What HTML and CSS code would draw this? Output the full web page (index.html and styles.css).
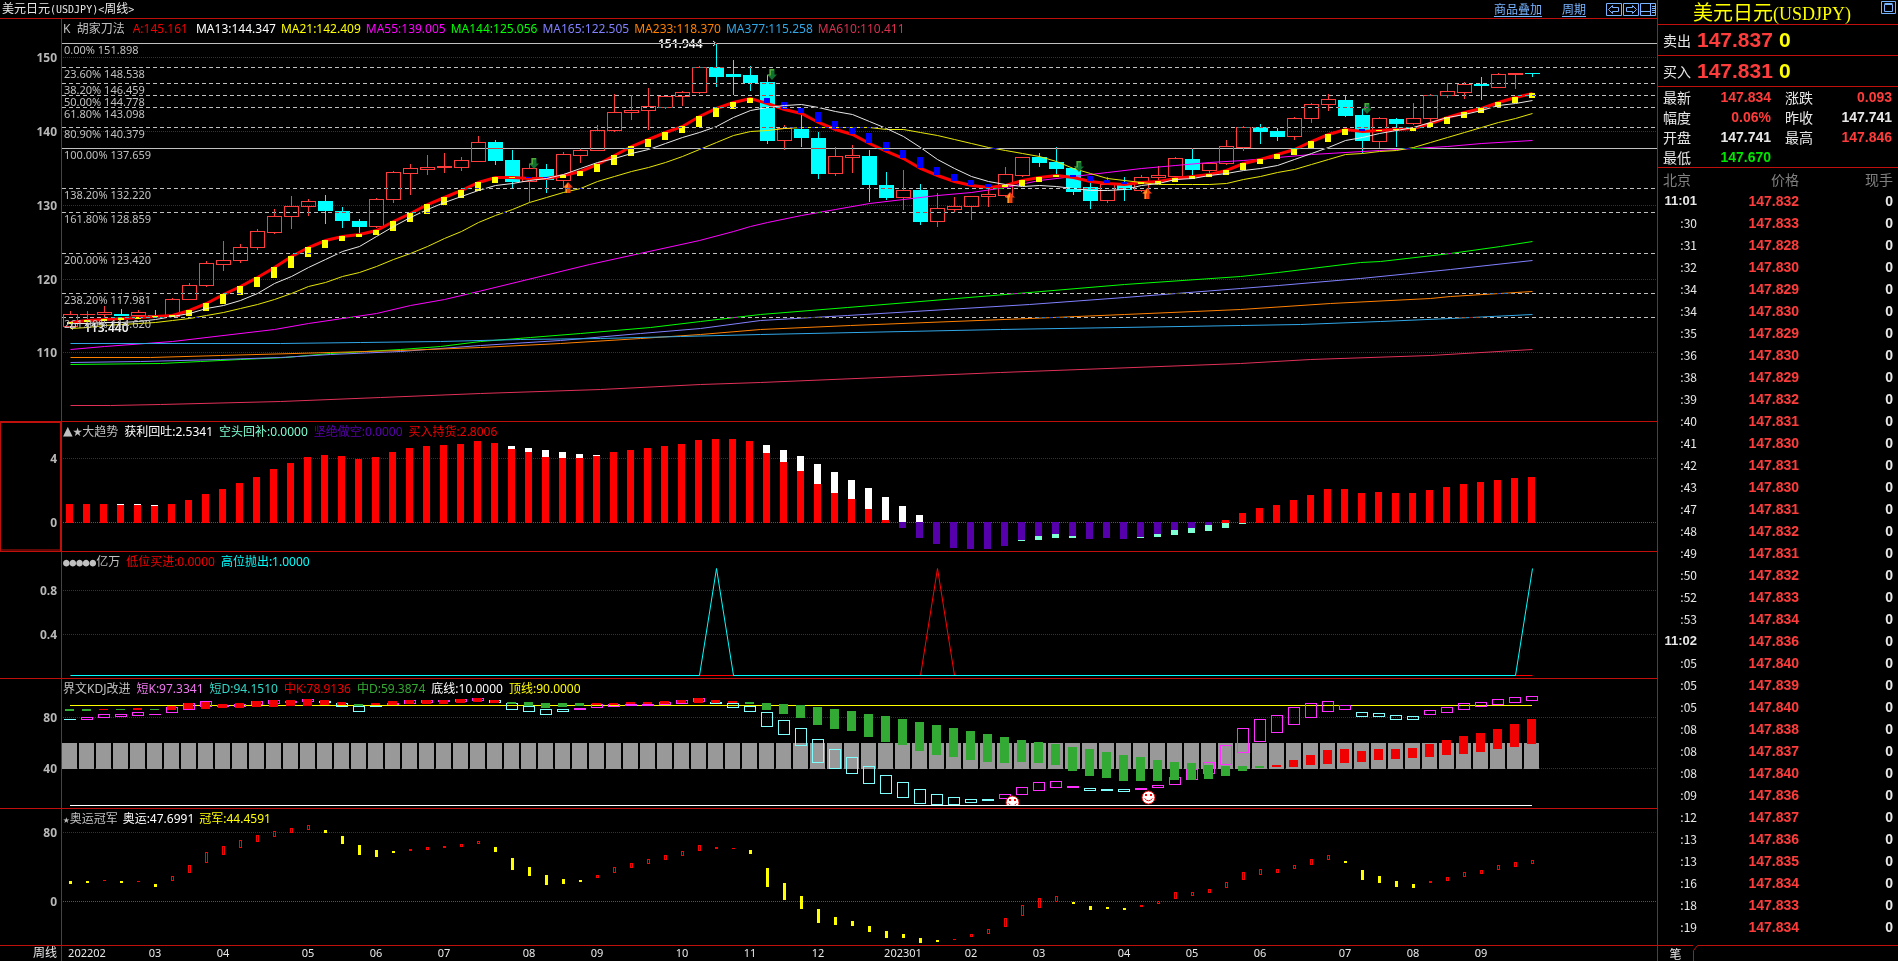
FILE: index.html
```html
<!DOCTYPE html>
<html lang="zh-CN">
<head>
<meta charset="utf-8">
<title>美元日元(USDJPY)周线</title>
<link rel="stylesheet" href="styles.css">
</head>
<body>
<div class="terminal">
  <main class="charts">
    <header class="titlebar">
      <h1 class="title">美元日元<span class="latin">(USDJPY)&lt;</span>周线<span class="latin">&gt;</span></h1>
      <nav class="tools">
        <a href="#overlay" class="tool">商品叠加</a>
        <a href="#period" class="tool">周期</a>
        <div class="tool-icons">
          <button class="icon" aria-label="向左"><svg width="17" height="15" viewBox="0 0 17 15"><path d="M.5 1.5h15v12H.5zM2.5 7.5l4-4v2h6v4h-6v2z"/></svg></button>
          <button class="icon" aria-label="向右"><svg width="17" height="15" viewBox="0 0 17 15"><path d="M.5 1.5h15v12H.5zM13.500 7.500l-4-4v2h-6v4h6v2z"/></svg></button>
          <button class="icon" aria-label="布局"><svg width="17" height="15" viewBox="0 0 17 15"><path d="M.5 1.500h15v12H.5zM.5 9.500h10M10.500 1.500v12M12 4.500h3M12 6.500h3M12 8.500h3M12 10.500h3"/></svg></button>
        </div>
      </nav>
    </header>
    <section class="panel panel-price">
      <svg class="plot" id="price"></svg>
      <p class="legend tight"><span class="name wide">K&nbsp; 胡家刀法</span><span class="c-red wide">A:145.161</span><span class="c-white">MA13:144.347</span><span class="c-yellow">MA21:142.409</span><span class="c-magenta">MA55:139.005</span><span class="c-lime">MA144:125.056</span><span class="c-violet">MA165:122.505</span><span class="c-orange">MA233:118.370</span><span class="c-blue">MA377:115.258</span><span class="c-rose">MA610:110.411</span></p>
    </section>
    <section class="panel panel-trend">
      <svg class="plot" id="trend"></svg>
      <p class="legend"><span class="name"><span class="mark large">▲★</span>大趋势</span><span class="c-white">获利回吐:2.5341</span><span class="c-mint">空头回补:0.0000</span><span class="c-purple">坚绝做空:0.0000</span><span class="c-red">买入持货:2.8006</span></p>
    </section>
    <section class="panel panel-signal">
      <svg class="plot" id="signal"></svg>
      <p class="legend"><span class="name"><span class="mark">●●●●●</span>亿万</span><span class="c-red">低位买进:0.0000</span><span class="c-cyan">高位抛出:1.0000</span></p>
    </section>
    <section class="panel panel-kdj">
      <svg class="plot" id="kdj"></svg>
      <p class="legend"><span class="name">界文KDJ改进</span><span class="c-pink">短K:97.3341</span><span class="c-teal">短D:94.1510</span><span class="c-red">中K:78.9136</span><span class="c-green">中D:59.3874</span><span class="c-white">底线:10.0000</span><span class="c-yellow">顶线:90.0000</span></p>
    </section>
    <section class="panel panel-champ">
      <svg class="plot" id="champ"></svg>
      <p class="legend tight"><span class="name"><span class="mark">★</span>奥运冠军</span><span class="c-white">奥运:47.6991</span><span class="c-yellow">冠军:44.4591</span></p>
    </section>
    <footer class="panel panel-axis"><svg class="plot" id="axis"></svg></footer>
  </main>
  <aside class="quote">
    <div class="quote-title">
      <h2>美元日元<span class="latin">(USDJPY)</span></h2>
      <button class="icon" aria-label="窗口"><svg width="17" height="15" viewBox="0 0 17 15"><path d="M1.500 1.500h14v12h-14zM4.500 4.500h8v7h-8zM4.500 3.500h8"/></svg></button>
    </div>
    <div class="deal"><span>卖出</span><strong class="c-up">147.837</strong><strong class="c-yellow">0</strong></div>
    <div class="deal"><span>买入</span><strong class="c-up">147.831</strong><strong class="c-yellow">0</strong></div>
    <dl class="stats">
      <dt>最新</dt><dd class="c-up">147.834</dd><dt>涨跌</dt><dd class="c-up">0.093</dd>
      <dt>幅度</dt><dd class="c-up">0.06%</dd><dt>昨收</dt><dd>147.741</dd>
      <dt>开盘</dt><dd>147.741</dd><dt>最高</dt><dd class="c-up">147.846</dd>
      <dt>最低</dt><dd class="c-down">147.670</dd>
    </dl>
    <div class="tick-area">
      <table class="ticks">
        <thead><tr><th>北京</th><th>价格</th><th>现手</th></tr></thead>
        <tbody id="ticks"></tbody>
      </table>
    </div>
    <div class="tabs"><button class="tab">笔</button><svg class="tab-edge" width="12" height="16" viewBox="0 0 12 16"><path d="M.5 16V5.500l4-5H12"/></svg><span class="tab-line"></span></div>
  </aside>
</div>
<script src="chart.js"></script>
</body>
</html>
```

FILE: styles.css
```css
* { box-sizing: border-box; margin: 0; padding: 0; }
:root { --rule: #c0100c; --text: #e8e8e8; --link: #78b4ff; }
body {
  background: #000;
  color: var(--text);
  font-family: "Noto Sans", "Noto Sans CJK SC", sans-serif;
  font-size: 12px;
}
.terminal { display: grid; grid-template-columns: minmax(0, 1fr) 241px; height: 100vh; overflow: hidden; }
.charts {
  display: grid;
  grid-template-rows: 18px 403fr 130fr 127fr 130fr 137fr 16px;
  min-height: 0;
}
.titlebar { display: flex; justify-content: space-between; align-items: center; padding-left: 2px; line-height: 18px; }
.title { font-size: 12px; font-weight: 400; font-family: "Noto Sans CJK SC", sans-serif; }
.title .latin { font-family: "DejaVu Sans Mono", monospace; font-size: 10px; }
.tools { display: flex; align-items: center; gap: 20px; font-family: "Noto Sans CJK SC", sans-serif; }
.tool { color: var(--link); text-decoration: underline; text-underline-offset: 2px; }
.tool-icons { display: flex; }
.icon { display: block; background: none; border: 0; height: 15px; width: 17px; }
.icon svg { display: block; fill: none; stroke: var(--link); }

.panel { position: relative; border-top: 1px solid var(--rule); min-height: 0; overflow: hidden; }
.panel-axis, .panel-axis .plot { overflow: visible; }
.plot { position: absolute; inset: 0; width: 100%; height: 100%; }
.legend { position: relative; display: flex; gap: 6px; padding-left: 63px; line-height: 20px; white-space: nowrap; }
.legend.tight { gap: 5px; }
.legend .wide { margin-right: 3px; }
.mark { font-family: "DejaVu Sans Mono", monospace; font-size: 11px; line-height: 1; }
.mark.large { font-size: 16px; }
.name { color: #c0c0c0; }
.c-red { color: #f00000; }
.c-white { color: #fff; }
.c-yellow { color: #ff0; }
.c-magenta { color: #f0f; }
.c-lime { color: #0f0; }
.c-violet { color: #8080ff; }
.c-orange { color: #ff8000; }
.c-blue { color: #30a8e8; }
.c-rose { color: #d83050; }
.c-mint { color: #7fffd4; }
.c-purple { color: #5a00b0; }
.c-cyan { color: #0ff; }
.c-pink { color: #ee78ee; }
.c-teal { color: #30d8c8; }
.c-green { color: #33aa33; }
.c-up { color: #ff3c3c; }
.c-down { color: #00e600; }

.plot text { font-family: "Noto Sans", "Noto Sans CJK SC", sans-serif; }
.tick-label { font-size: 12px; font-weight: 700; fill: #b8b8b8; text-anchor: end; }
.fib-label { font-size: 11px; fill: #c0c0c0; }
.peak-label { font-size: 12px; font-weight: 600; fill: #f0f0f0; }
.plot .month { font-family: "Noto Sans", sans-serif; font-size: 11px; fill: var(--text); text-anchor: middle; }
.plot .unit { font-family: "Noto Sans CJK SC", sans-serif; font-size: 12px; fill: var(--text); text-anchor: end; }
.xor { mix-blend-mode: difference; }

.quote {
  display: flex;
  flex-direction: column;
  border-left: 1px solid var(--rule);
  font-family: "Noto Sans CJK SC", sans-serif;
  font-size: 14px;
  min-height: 0;
}
.quote-title { display: flex; height: 24px; padding-right: 1px; }
.quote-title h2 { flex: 1; padding-left: 6px; text-align: center; font-size: 20px; line-height: 24px; font-weight: 400; color: #ff0; white-space: nowrap; }
.quote-title .latin { font-family: "Liberation Serif", serif; font-size: 18px; }
.deal { display: flex; align-items: center; height: 31px; padding-left: 5px; border-top: 1px solid var(--rule); }
.deal strong { margin-left: 6px; font-family: "Liberation Sans", sans-serif; font-size: 21px; }
.stats {
  display: grid;
  grid-template-columns: 28px 80px 42px 79px;
  grid-auto-rows: 20px;
  padding-left: 5px;
  line-height: 20px;
  height: 81px;
  border-top: 1px solid var(--rule);
}
.stats dt:nth-of-type(even) { padding-left: 14px; }
.stats dd { text-align: right; font-family: "Liberation Sans", sans-serif; font-weight: 700; }
.tick-area { flex: 1; min-height: 0; overflow: hidden; border-top: 1px solid var(--rule); }
.ticks { width: 100%; border-collapse: collapse; table-layout: fixed; }
.ticks th { color: #808080; font-weight: 400; text-align: right; }
.ticks th:first-child { width: 39px; padding-left: 5px; text-align: left; }
.ticks th:nth-child(2) { width: 102px; }
.ticks tr { height: 22px; line-height: 22px; }
.ticks td { text-align: right; font-family: "Liberation Sans", sans-serif; font-weight: 700; }
.ticks td.minute { font-size: 13px; }
.ticks td.second { font-family: "Noto Sans CJK SC", sans-serif; font-size: 12px; font-weight: 400; }
.ticks td:last-child, .ticks th:last-child { padding-right: 5px; }
.tabs { display: flex; height: 16px; }
.tab { width: 35px; border: 0; border-top: 1px solid var(--rule); background: none; color: var(--text); font: 12px/15px "Noto Sans CJK SC", sans-serif; }
.tab-edge { fill: none; stroke: var(--rule); }
.tab-line { flex: 1; border-top: 1px solid var(--rule); }
```

FILE: chart.js
```js
const BASE_W = 1657, LEFT = 62, FIRST = 70, STEP = 17;

/* kind, body top, body bottom, high, low */
const candles = `u314,326,311,327 u314,314,311,319 u312,314,306,318 d314,315,309,316 u312,315,310,317 d315,315,310,316
u299,316,298,316 u285,299,283,299 u263,285,261,287 u260,264,241,271 u247,260,244,263 u231,247,229,250 u216,232,209,234
u206,216,196,229 u201,206,199,216 d201,210,195,224 d211,220,207,228 d221,226,219,233 u199,226,198,228 u172,199,171,203
u168,173,164,195 u167,169,155,175 u166,167,153,173 u160,167,157,171 u142,161,136,161 d142,160,140,165 d160,181,150,188
u168,181,164,202 d169,179,164,193 u154,180,152,188 u150,155,148,163 u130,150,125,150 u112,130,94,132 u110,112,95,120
u106,110,88,130 u96,107,96,109 u92,96,91,106 u67,92,66,94 d67,76,43,87 d74,76,60,95 d75,82,66,91 d82,140,75,144
u128,140,125,150 d129,137,115,147 d138,173,132,179 u156,173,147,176 u155,157,145,173 d156,184,150,202 d185,197,172,200
u190,197,170,210 d190,221,184,225 u208,221,193,227 u206,209,197,213 u196,206,196,220 u194,196,188,207 u174,195,167,196
u157,175,157,177 d157,162,153,167 d162,168,147,174 d168,191,168,195 d187,200,183,209 u184,200,177,203 d185,189,177,201
u177,190,175,191 u175,177,166,180 u158,176,157,182 d159,169,148,175 u163,170,163,177 u146,163,140,165 u127,147,126,151
d127,131,124,144 d131,136,128,141 u118,136,117,140 u104,118,103,123 u99,104,94,111 d100,115,96,117 d115,140,109,153
u118,141,117,148 d119,123,118,147 u118,123,103,125 u95,118,94,122 u91,95,83,98 u84,92,82,99 d84,85,77,100 u74,87,73,87
u73,74,73,89 d73,73,73,77`;

/* y: rising marker under the A line, b: falling marker above it */
const markers = `y322,324 y320,322 y319,321 y318,320 y317,319 y316,317 y315,317 y310,316 y303,311 y294,304 y286,295 y277,287 y267,278
y256,268 y247,257 y240,248 y236,241 y234,237 y230,235 y221,231 y213,222 y204,214 y197,205 y190,198 y182,191 y177,183 y177,178
b177,178 b177,178 y175,178 y171,176 y164,172 y155,165 y146,156 y139,147 y132,140 y126,133 y116,127 y108,117 y102,109 y98,103
b98,103 b102,109 b108,113 b112,122 b121,129 b128,134 b133,143 b142,151 b150,158 b157,168 b167,175 b174,181 b180,185 b184,187
y185,187 y180,186 y177,182 y175,177 b175,177 b176,181 b180,183 b182,184 y182,184 y181,184 y178,182 y176,179 y174,177 y170,175
y163,170 y159,164 y154,159 y149,155 y141,148 y134,142 y129,135 b129,131 y130,131 y129,130 y128,131 y123,127 y117,124 y112,118
y108,113 y102,107 y97,103 y93,98`;

const ma13 = [323,323,322,322,321,319,316,313,308,305,300,293,283,276,267,259,251,246,236,226,217,209,202,196,190,185,183,180,178,174,168,162,158,153,149,143,137,132,126,117,110,107,105,104,107,111,114,121,128,136,147,159,168,176,181,184,186,185,186,188,190,190,189,185,183,179,178,175,173,170,168,165,159,153,147,140,137,133,130,127,122,117,114,110,105,103,100];
const ma21 = [328,327,325,324,323,322,320,318,315,312,308,304,299,293,286,282,276,272,266,259,253,246,238,231,222,215,209,202,197,192,188,181,176,171,167,162,156,149,142,135,131,130,128,127,127,127,127,127,129,129,132,135,139,143,147,150,153,156,161,168,173,178,180,182,184,184,184,184,183,179,176,172,169,164,159,154,153,151,150,147,142,137,132,127,122,118,113];
/* long averages as x,y points */
const longMa = {
  '#f0f': '70,349 104,346 172,341 274,329 308,323 342,318 376,313 410,305 444,299 478,291 589,264 699,240 733,231 750,226 767,222 801,215 835,209 869,203 903,199 937,195 971,192 1005,187 1039,180 1073,176 1107,172 1141,168 1175,165 1209,162 1243,160 1277,157 1311,154 1379,150 1413,148 1447,146 1481,143 1532,140',
  '#0f0': '70,364 160,363 200,361 240,359 285,357 330,353 400,349 440,346 480,341 530,337 580,333 650,327 700,321 760,314 847,307 1029,292 1124,284 1240,276 1278,272 1360,262 1380,261 1450,253 1500,246 1532,241',
  '#8080ff': '70,362 140,361 220,359 280,357 330,354 400,351 480,345 560,340 640,333 700,328 760,320 847,315 1029,304 1124,297 1240,288 1278,285 1360,278 1410,273 1450,269 1532,260',
  '#ff8000': '70,357 150,357 220,355 330,352 400,350 480,347 560,343 640,338 700,334 760,329 850,325 1029,318 1124,314 1240,309 1330,303 1430,298 1450,296 1532,291',
  '#30a8e8': '70,343 280,343 360,342 440,341 520,339 600,338 680,336 760,334 1000,329 1240,325 1300,324 1380,321 1450,318 1532,314',
  '#e03058': '70,405 110,405 160,404 280,401 380,397 480,393 600,389 700,384 760,382 1000,372 1240,363 1310,359 1430,355 1532,349'
};
const fib = [[43,'0.00% 151.898',1],[67,'23.60% 148.538'],[83,'38.20% 146.459'],[95,'50.00% 144.778'],[107,'61.80% 143.098'],[127,'80.90% 140.379'],[148,'100.00% 137.659',1],[188,'138.20% 132.220'],[212,'161.80% 128.859'],[253,'200.00% 123.420'],[293,'238.20% 117.981'],[317,'261.80% 114.620']];

/* r: top of red, w: top of white cap, p: foot of purple, m: foot of mint */
const trend = `r504 r504 r504 w504r505 w504r505 w505r506 r504 r500 r494 r489 r483 r477 r469 r463 r457 r455 r456 r459 r457 r452 r448 r446
r445 r444 r441 r443 w446r449 w448r452 w450r457 w452r458 w454r458 w455r456 r452 r450 r448 r446 r444 r440 r439 r439 r441 w445r453
w450r462 w456r471 w464r484 w472r493 w480r499 w488r509 w497r520 w506p528 w515p538 p544 p548 p549 p549 p546 p540m541 p536m540
p534m538 p536m538 p539 p538 p539 p537m538 p534m537 p530m535 p528m533 p525m531 r520m528 r513m524 r508 r505 r500 r495 r489 r489
r493 r492 r493 r493 r490 r487 r484 r482 r480 r478 r477`;

/* short K box (m/c) followed by mid K/D block (g/r) */
const kdj = `c719,719g709,711 m717,719g709,711 m714,717r709,710 m714,716g709,710 m712,715r708,710 m714,714g709,710 m707,712r706,710
m703,709r703,709 m701,706r702,709 m705,706r704,708 m704,706r703,708 m701,704r701,707 m700,703r700,707 m701,702r700,706
m699,701r699,706 c701,702r700,705 c703,706r702,705 c706,711g704,706 c706,706r703,705 m703,704r701,705 m700,703r700,704
m700,702r700,704 m700,701r700,704 m699,701r699,703 m698,700r698,702 c700,702r700,703 c703,709g702,704 c706,711g702,706
c709,714g703,708 c709,711g703,707 m708,709g703,706 m704,707r703,705 m704,706r703,705 m704,705r702,704 m704,705r702,704
m702,704r701,704 m700,703r700,703 m698,701r698,703 c702,703r700,703 c703,707r701,703 c706,711g702,704 c712,726g703,710
c720,734g704,714 c728,745g705,718 c739,762g707,725 c749,768g709,729 c757,773g711,731 c766,783g714,737 c775,793g716,742
c782,797g719,745 c789,803g722,751 c794,804g725,755 c797,804g728,757 c799,802g731,760 c799,800g734,762 m794,798g737,763
m787,794g740,762 m782,790g742,763 m781,787g744,765 m786,787g747,771 c788,790g749,776 c789,790g752,778 c789,791g755,781
m788,789g757,781 m785,787g760,781 m777,784g762,780 m769,779g763,780 m762,773g765,779 m745,764g766,776 m728,752g766,771
m719,741g766,768 m715,732r765,767 m707,724r760,767 m703,717r755,765 m701,711r750,764 m705,709r749,763 c712,716r751,762
c713,716r749,760 c715,719r749,759 c716,719r748,758 m710,714r744,757 m707,712r740,755 m703,709r736,754 m702,706r733,752
m699,704r729,749 m697,702r724,747 m696,700r719,744`;

const champ = `y881,884 y881,883 r880,881 y881,883 r881,882 y884,887 r876,881 r865,873 r852,863 r846,855 r840,848 r835,842 r831,837
r828,833 r825,830 y830,833 y836,844 y845,855 y850,857 y851,853 r849,851 r847,850 r846,848 r844,847 r841,844 y847,852 y858,870
y867,876 y875,885 y879,884 y880,882 r875,878 r867,873 r863,868 r859,864 r855,860 r851,856 r845,851 r847,849 r848,849 y850,854
y868,887 y883,900 y896,909 y909,923 y917,925 y921,926 y926,932 y931,938 y934,938 y938,943 y940,942 r939,940 r934,937 r929,934
r918,927 r905,916 r898,908 r896,902 y902,904 y906,910 y907,909 y908,910 r905,907 r901,904 r892,899 r892,896 r889,893 r882,888
r872,880 r869,875 r869,873 r865,869 r859,865 r855,860 y861,863 y870,880 y876,883 y881,887 y884,888 r881,883 r877,881 r872,877
r870,874 r865,870 r862,867 r860,864`;

const months = [[1,'202202'],[5,'03'],[9,'04'],[14,'05'],[18,'06'],[22,'07'],[27,'08'],[31,'09'],[36,'10'],[40,'11'],[44,'12'],[49,'202301'],[53,'02'],[57,'03'],[62,'04'],[66,'05'],[70,'06'],[75,'07'],[79,'08'],[83,'09']];

const split = s => s.trim().split(/\s+/);
const nums = s => s.match(/\d+/g).map(Number);

function surface(id, top, height) {
  const el = document.getElementById(id);
  const { width, height: h } = el.getBoundingClientRect();
  const X = x => x < LEFT ? x : Math.round(LEFT + (x - LEFT) * (width - LEFT) / (BASE_W - LEFT));
  const Y = y => Math.round((y - top) * h / height);
  let out = '';
  const s = {
    X, Y,
    C: i => X(FIRST + STEP * i),
    add: t => { out += t; },
    fill(x, y1, y2, w, c) { out += `<rect x="${x}" y="${Y(y1)}" width="${w}" height="${Math.max(1, Y(y2) - Y(y1))}" fill="${c}"/>`; },
    box(x, y1, y2, w, c) { out += `<rect x="${x + .5}" y="${Y(y1) + .5}" width="${w}" height="${Math.max(0, Y(y2) - Y(y1)) || .01}" fill="none" stroke="${c}" shape-rendering="crispEdges"/>`; },
    hline(y, c, x1, x2, extra = '') { out += `<line x1="${x1}" x2="${x2}" y1="${Y(y) + .5}" y2="${Y(y) + .5}" stroke="${c}" ${extra}/>`; },
    poly(pts, c, w = 1) { out += `<polyline points="${pts.map(p => `${X(p[0]) + .5},${Y(p[1]) + .5}`).join(' ')}" fill="none" stroke="${c}" stroke-width="${w}"/>`; },
    text(x, y, t, cls) { out += `<text x="${x}" y="${Y(y)}" class="${cls}">${t}</text>`; },
    grid(list) {
      for (const [y, label, zero] of list) {
        s.hline(y, zero ? '#d82010' : '#980808', LEFT + 1, width, 'stroke-dasharray="1 1"');
        s.text(57, y + 5, label, 'tick-label');
      }
    },
    done() {
      out += `<path d="M61.5 0V${h}" stroke="#c0100c"/>`;
      el.innerHTML = out;
    },
    width, h
  };
  return s;
}

function arrow(s, x, y, up) {
  const d = up ? 'M0 5.500L5 0l5 5.500H7.500V11h-5V5.500z' : 'M0 5.500h2.500V0h5v5.500H10L5 11z';
  const hi = up ? 'M1 5.500L5 1v4l-1 1v5H2.500V5.500z' : 'M2.500 0H7v1.500H4v5H1.500L0 5.500h2.500z';
  s.add(`<g transform="translate(${s.X(x) - 5} ${s.Y(y)})"><path d="${d}" fill="${up ? '#f04010' : '#107030'}"/><path d="${hi}" fill="${up ? '#ff9820' : '#50a838'}"/></g>`);
}

function smiley(s, x, y, visible) {
  s.add(`<svg x="${s.X(x) - 7}" y="${s.Y(y)}" width="15" height="${visible}" overflow="hidden"><circle cx="7.500" cy="7.500" r="6.500" fill="#fff" stroke="#e01010"/><path d="M4 4h2v2H4zM9 4h2v2H9z" fill="#f00"/><path d="M3.500 8.500q4 4.500 8 0" fill="none" stroke="#f00"/></svg>`);
}

function drawPrice() {
  const s = surface('price', 19, 402);
  s.grid([[57,'150'],[131,'140'],[205,'130'],[279,'120'],[352,'110']]);
  split(candles).forEach((t, i) => {
    const [a, b, hi, lo] = nums(t), up = t[0] === 'u', x = s.C(i), c = up ? '#ff3c3c' : '#00ffff';
    if (up) {
      s.box(x - 7, a, b, 14, c);
      if (hi < a) s.fill(x, hi, a, 1, c);
      if (lo > b) s.fill(x, b + 1, lo, 1, c);
    } else {
      s.fill(x - 7, a, b + 1, 15, c);
      s.fill(x, hi, lo, 1, c);
    }
  });
  const at = (y, i) => [FIRST + STEP * i, y];
  for (const [c, pts] of Object.entries(longMa)) s.poly(split(pts).map(nums), c);
  const mk = split(markers).map(t => [t[0], ...nums(t)]);
  s.poly(mk.map(([k, a, b], i) => at(k === 'y' ? a : b, i)), '#f00', 3);
  mk.forEach(([k, a, b], i) => s.fill(s.C(i) - 3, a, b, 6, k === 'y' ? '#ff0' : '#00f'));
  s.poly(ma21.map(at), '#e8e800');
  s.poly(ma13.map(at), '#e8e8e8');
  [[534,158],[772,69],[1079,161],[1367,103]].forEach(p => arrow(s, ...p, false));
  [[568,182],[1010,192],[1147,188]].forEach(p => arrow(s, ...p, true));
  s.text(s.X(658), 48, '151.944', 'peak-label');
  s.add(`<path d="M${s.X(713)} ${s.Y(41)}l3 2.500l-3 2.500" fill="none" stroke="#f0f0f0"/>`);
  s.text(84, 332, '113.440', 'peak-label');
  s.add(`<path d="M76 ${s.Y(327)}h-6m3-2.500l-3 2.500l3 2.500" fill="none" stroke="#f0f0f0"/>`);
  fib.forEach(([y, t, solid]) => {
    s.hline(y, '#c0c0c0', LEFT, s.width, `class="xor" ${solid ? '' : 'stroke-dasharray="4 3"'}`);
    s.text(64, y + 11, t, 'fib-label');
  });
  s.done();
}

function drawTrend() {
  const s = surface('trend', 422, 129);
  s.grid([[458,'4'],[522,'0',1]]);
  split(trend).forEach((t, i) => {
    const v = {};
    t.replace(/([rwpm])(\d+)/g, (_, k, n) => { v[k] = +n; });
    const x = s.C(i) - 4;
    if (v.w) s.fill(x, v.w, 522, 7, '#fff');
    if (v.m) s.fill(x, v.r ? 523 : 522, v.m, 7, '#7fffd4');
    if (v.p) s.fill(x, 522, v.p, 7, '#5500aa');
    if (v.r) s.fill(x, v.r, 523, 7, '#f00');
  });
  s.done();
  document.getElementById('trend').insertAdjacentHTML('beforeend', `<path d="M0 .5h61M.5 0V${s.h}M60.500 0V${s.h}M0 ${s.h - 1}h61" fill="none" stroke="#c0100c" stroke-width="1"/>`);
}

function drawSignal() {
  const s = surface('signal', 552, 126);
  s.grid([[590,'0.8'],[634,'0.4']]);
  const x = i => FIRST + STEP * i;
  s.poly([[70,675],[x(50),675],[x(51),568],[x(52),675],[1532,675]], '#f00');
  s.poly([[70,675],[x(37),675],[x(38),568],[x(39),675],[x(85),675],[1532,568]], '#00ffff');
  s.done();
}

function drawKdj() {
  const s = surface('kdj', 679, 129);
  s.grid([[717,'80'],[768,'40']]);
  const rows = split(kdj);
  rows.forEach((_, i) => s.fill(s.C(i) - 8, 743, 769, 15, '#999'));
  s.hline(705, '#ff0', s.C(0), s.C(86));
  rows.forEach((t, i) => {
    const [a, b, c, d] = nums(t), x = s.C(i);
    s.box(x - 6, a, b, 11, t[0] === 'm' ? '#ff30ff' : '#7fffff');
    s.fill(x - 5, c, d, 9, t.includes('g') ? '#33aa33' : '#f00000');
  });
  smiley(s, 1012, 795, 10);
  smiley(s, 1148, 790, 15);
  s.hline(805, '#fff', s.C(0), s.C(86));
  s.done();
}

function drawChamp() {
  const s = surface('champ', 809, 136);
  s.grid([[832,'80'],[901,'0',1]]);
  split(champ).forEach((t, i) => {
    const [a, b] = nums(t), x = s.C(i) - 1;
    if (t[0] === 'y' || b - a < 3) s.fill(x, a, b, 3, t[0] === 'y' ? '#ff0' : '#f00');
    else s.box(x, a, b - 1, 2, '#f00');
  });
  s.done();
}

function drawAxis() {
  const s = surface('axis', 946, 15);
  s.text(57, 957, '周线', 'unit');
  months.forEach(([i, t]) => s.text(s.C(i), 957, t, 'month'));
  s.done();
}

function fillTicks() {
  const ticks = `11:01 832,:30 833,:31 828,:32 830,:34 829,:34 830,:35 829,:36 830,:38 829,:39 832,:40 831,:41 830,:42 831,:43 830,:47 831,:48 832,:49 831,:50 832,:52 833,:53 834,11:02 836,:05 840,:05 839,:05 840,:08 838,:08 837,:08 840,:09 836,:12 837,:13 836,:13 835,:16 834,:18 833,:19 834`;
  document.getElementById('ticks').innerHTML = ticks.split(',').map(r => {
    const [t, p] = r.split(' ');
    return `<tr><td class="${t[0] === ':' ? 'second' : 'minute'}">${t}</td><td class="c-up">147.${p}</td><td>0</td></tr>`;
  }).join('');
}

function drawAll() {
  drawPrice(); drawTrend(); drawSignal(); drawKdj(); drawChamp(); drawAxis();
}
fillTicks();
drawAll();
addEventListener('resize', drawAll);
```
